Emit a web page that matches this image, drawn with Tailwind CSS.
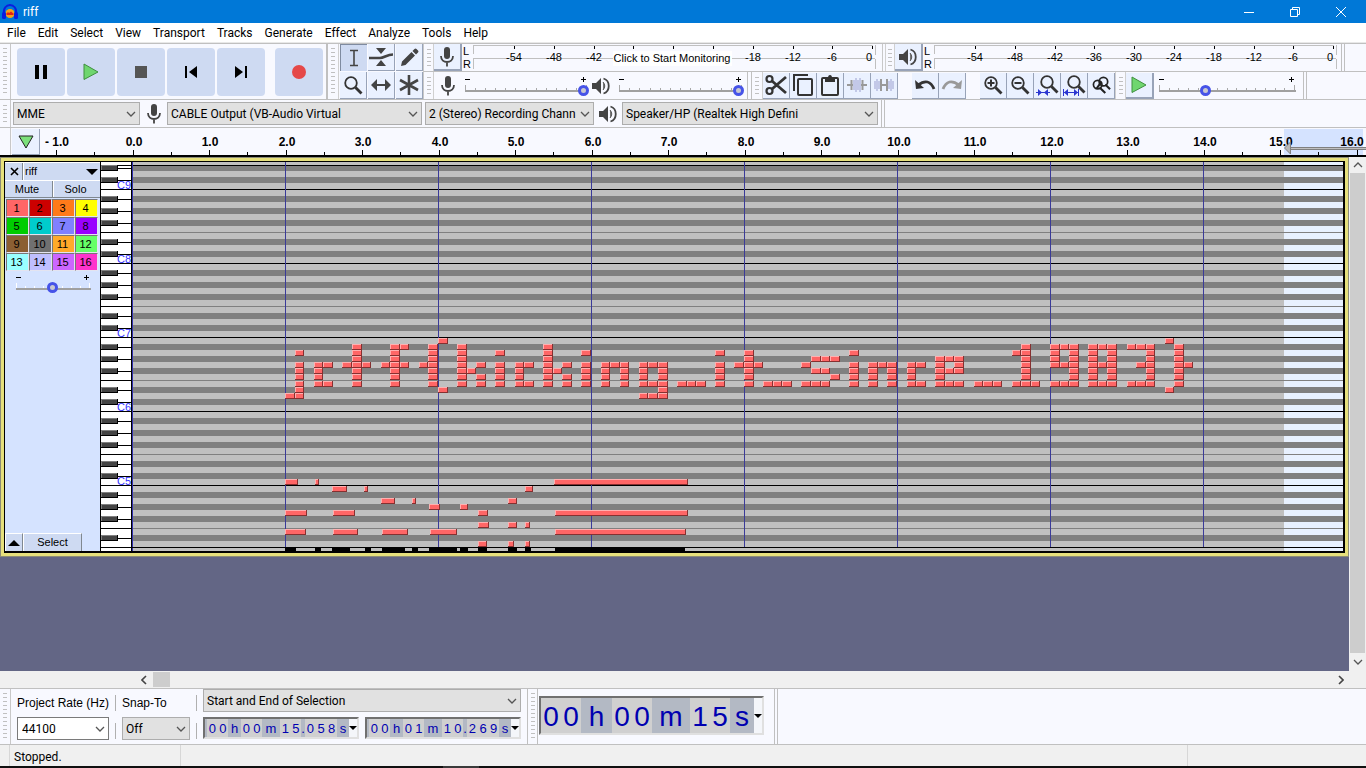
<!DOCTYPE html>
<html lang="en">
<head>
<meta charset="utf-8">
<title>riff</title>
<script src="https://cdn.jsdelivr.net/npm/@tailwindcss/browser@4"></script>
</head>
<body class="h-screen flex flex-col overflow-hidden bg-[#f8f9ff] font-['Liberation_Sans',sans-serif] text-black text-[11px] select-none">
<svg class="hidden">
  <symbol id="mic" viewBox="0 0 16 20"><rect x="5" y="0" width="6" height="12" rx="3" fill="#444"/><path d="M2 9c0 8 12 8 12 0M8 15v4.500" fill="none" stroke="#444" stroke-width="1.800"/></symbol>
  <symbol id="spk" viewBox="0 0 20 18"><path d="M1 6h4l5-5v16l-5-5H1z" fill="#444"/><path d="M12 5q3.500 4 0 8" fill="#777" stroke="#555"/><path d="M12.500 1.500c7 2 7 13 0 15" fill="none" stroke="#444" stroke-width="1.800"/></symbol>
  <symbol id="chev" viewBox="0 0 10 6"><path d="M1 1l4 4 4-4" fill="none" stroke="#555" stroke-width="1.300"/></symbol>
  <symbol id="lens" viewBox="0 0 20 20"><circle cx="8" cy="8" r="5.800" fill="none" stroke="#333" stroke-width="1.800"/><path d="M12.500 12.500l6 6" stroke="#333" stroke-width="2.800"/></symbol>
  <symbol id="grab" viewBox="0 0 4 50"><path d="M0 1.500h4M0 5.500h4M0 9.500h4M0 13.500h4M0 17.500h4M0 21.500h4M0 25.500h4M0 29.500h4M0 33.500h4M0 37.500h4M0 41.500h4M0 45.500h4" stroke="#c0c0c0"/></symbol>
  <symbol id="grabs" viewBox="0 0 4 20"><path d="M0 1.500h4M0 5.500h4M0 9.500h4M0 13.500h4M0 17.500h4" stroke="#c0c0c0"/></symbol>
  <symbol id="playg" viewBox="0 0 16 18"><path d="M1 1v15.500L15 9z" fill="#6fd66f" stroke="#3f8f3f"/></symbol>
</svg>

<header class="h-[23px] shrink-0 bg-[#0078d7] flex items-center pl-[2px] pr-[2px] text-white font-[Roboto,sans-serif] text-[12px]">
  <svg class="w-4 h-4" viewBox="0 0 16 16"><path d="M2 10C0 -2 16 -2 14 10" fill="none" stroke="#0a1ee0" stroke-width="2"/><circle cx="8" cy="9.500" r="4.500" fill="#f6a01a"/><path d="M4 10l2-2 1 1 2-1.500 3 2.500-1 1H5z" fill="#e3221a"/><rect x="0" y="8" width="4" height="7" rx="1.500" fill="#0a1ee0"/><rect x="12" y="8" width="4" height="7" rx="1.500" fill="#0a1ee0"/></svg>
  <h1 class="ml-[5px] grow">riff</h1>
  <button aria-label="Minimize" class="w-[46px] h-full grid place-items-center"><svg class="w-[10px] h-[10px]" viewBox="0 0 10 10"><path d="M0 5.500h10" stroke="#fff"/></svg></button>
  <button aria-label="Restore" class="w-[46px] h-full grid place-items-center"><svg class="w-[10px] h-[10px]" viewBox="0 0 10 10" fill="none" stroke="#fff"><path d="M.5 2.500h7v7h-7zM2.500 2.500v-2h7v7h-2"/></svg></button>
  <button aria-label="Close" class="w-[46px] h-full grid place-items-center"><svg class="w-[10px] h-[10px]" viewBox="0 0 10 10"><path d="M0 0l10 10M10 0L0 10" stroke="#fff"/></svg></button>
</header>

<nav class="h-[20px] shrink-0 bg-white border-b border-[#e8e8e8] flex items-center pl-[7px] gap-[12px] font-[Roboto,sans-serif] text-[12px]">
  <button>File</button><button>Edit</button><button>Select</button><button>View</button><button>Transport</button><button>Tracks</button><button>Generate</button><button>Effect</button><button>Analyze</button><button>Tools</button><button>Help</button>
</nav>

<section class="h-[57px] shrink-0 flex border-t border-b border-[#c0c0c0]">
  <div class="w-[11px] border-r border-[#c8c8c8] grid place-items-center"><svg class="w-1 h-[50px]"><use href="#grab"/></svg></div>
  <div class="w-[317px] flex items-center pl-[6px] gap-[2px] border-r-2 border-[#c0c0c0]">
    <button aria-label="Pause" class="w-12 h-12 rounded bg-[#cedaf2] grid place-items-center"><svg class="w-3 h-[14px]" viewBox="0 0 12 14"><path d="M0 0h4v14H0zM8 0h4v14H8z"/></svg></button>
    <button aria-label="Play" class="w-12 h-12 rounded bg-[#cedaf2] grid place-items-center"><svg class="w-4 h-[18px]"><use href="#playg"/></svg></button>
    <button aria-label="Stop" class="w-12 h-12 rounded bg-[#cedaf2] grid place-items-center"><svg class="w-3 h-3" viewBox="0 0 12 12"><path d="M0 0h12v12H0z" fill="#555"/></svg></button>
    <button aria-label="Skip to start" class="w-12 h-12 rounded bg-[#cedaf2] grid place-items-center"><svg class="w-3 h-[14px]" viewBox="0 0 12 14"><path d="M0 1h2v12H0zM12 1v12L4 7z"/></svg></button>
    <button aria-label="Skip to end" class="w-12 h-12 rounded bg-[#cedaf2] grid place-items-center"><svg class="w-3 h-[14px]" viewBox="0 0 12 14"><path d="M10 1h2v12h-2zM0 1v12l8-6z"/></svg></button>
    <button aria-label="Record" class="w-12 h-12 ml-2 rounded bg-[#cedaf2] grid place-items-center"><svg class="w-[14px] h-[14px]" viewBox="0 0 14 14"><circle cx="7" cy="7" r="7" fill="#e54848"/></svg></button>
  </div>
  <div class="w-[11px] border-r border-[#d0d0d0] grid place-items-center"><svg class="w-1 h-[50px]"><use href="#grab"/></svg></div>
  <div class="w-[85px] grid grid-cols-3 grid-rows-2 gap-px pl-px border-r border-[#c8c8c8]">
    <button aria-label="Selection tool" class="bg-[#cedaf2] border-l border-t border-[#7f8ba0] grid place-items-center"><svg class="w-5 h-5" viewBox="0 0 20 20"><path d="M6 2.500h8M6 17.500h8M10 2.500v15" stroke="#444" stroke-width="1.600"/></svg></button>
    <button aria-label="Envelope tool" class="bg-[#eaf1ff] border-r border-b border-[#98a3b8] grid place-items-center"><svg class="w-6 h-[22px]" viewBox="0 0 24 22"><path d="M7 2h10l-5 6zM7 20h10l-5-6z" fill="#444"/><path d="M0 12h11c4 0 7-3.500 13-3.500" fill="none" stroke="#444" stroke-width="2.500"/></svg></button>
    <button aria-label="Draw tool" class="bg-[#eaf1ff] border-r border-b border-[#98a3b8] grid place-items-center"><svg class="w-[19px] h-[19px]" viewBox="0 0 19 19"><path d="M1 18l1-4.500L11.500 4l3.500 3.500L5.500 17zM12.500 3l2-2q1-1 2 0l1.500 1.500q1 1 0 2l-2 2z" fill="#444"/></svg></button>
    <button aria-label="Zoom tool" class="bg-[#eaf1ff] border-r border-b border-[#98a3b8] grid place-items-center"><svg class="w-5 h-5"><use href="#lens"/></svg></button>
    <button aria-label="Time shift tool" class="bg-[#eaf1ff] border-r border-b border-[#98a3b8] grid place-items-center"><svg class="w-5 h-3" viewBox="0 0 20 12"><path d="M0 6l6-6v12zM20 6l-6-6v12z" fill="#444"/><path d="M4 6h12" stroke="#444" stroke-width="2"/></svg></button>
    <button aria-label="Multi tool" class="bg-[#eaf1ff] border-r border-b border-[#98a3b8] grid place-items-center"><svg class="w-5 h-5" viewBox="0 0 20 20"><path d="M10 0v20M1 5l18 10M19 5L1 15" stroke="#444" stroke-width="2.600"/></svg></button>
  </div>
  <div class="grow flex flex-col">
    <div class="h-[28px] flex border-b border-[#c0c0c0]">
      <div class="w-[10px] border-r border-[#d0d0d0] grid place-items-center"><svg class="w-1 h-5"><use href="#grabs"/></svg></div>
      <button aria-label="Recording meter" class="w-[28px] bg-[#eaf1ff] border-r-2 border-b-2 border-[#98a3b8] grid place-items-center"><svg class="w-4 h-5"><use href="#mic"/></svg></button>
      <svg class="meter w-[420px] h-[27px]" data-zero="410" data-note="Click to Start Monitoring"></svg>
      <div class="w-[3px] border-l border-[#c8c8c8]"></div>
      <div class="w-[10px] border-x border-[#d0d0d0] grid place-items-center"><svg class="w-1 h-5"><use href="#grabs"/></svg></div>
      <button aria-label="Playback meter" class="w-[28px] bg-[#eaf1ff] border-r-2 border-b-2 border-[#98a3b8] grid place-items-center"><svg class="w-5 h-[18px]"><use href="#spk"/></svg></button>
      <svg class="meter w-[418px] h-[27px]" data-zero="410" data-note=""></svg>
      <div class="w-[4px] border-x border-[#c0c0c0]"></div>
    </div>
    <div class="h-[27px] flex items-center">
      <div class="w-[10px] h-full border-r border-[#d0d0d0] grid place-items-center"><svg class="w-1 h-5"><use href="#grabs"/></svg></div>
      <svg class="w-4 h-5 ml-[6px] mr-[9px]"><use href="#mic"/></svg>
      <div class="slider relative w-[124px] h-[26px]" data-n="12" data-w="124"><input type="range" aria-label="Recording volume" value="100" class="absolute left-0 top-3 w-full h-[11px] appearance-none bg-transparent [&::-webkit-slider-thumb]:appearance-none [&::-webkit-slider-thumb]:w-[11px] [&::-webkit-slider-thumb]:h-[11px] [&::-webkit-slider-thumb]:rounded-full [&::-webkit-slider-thumb]:border-[3px] [&::-webkit-slider-thumb]:border-[#4653e8] [&::-webkit-slider-thumb]:bg-[#c8c8d0]"></div>
      <svg class="w-5 h-[18px] ml-[2px] mr-[8px]"><use href="#spk"/></svg>
      <div class="slider relative w-[125px] h-[26px]" data-n="12" data-w="125"><input type="range" aria-label="Playback volume" value="100" class="absolute left-0 top-3 w-full h-[11px] appearance-none bg-transparent [&::-webkit-slider-thumb]:appearance-none [&::-webkit-slider-thumb]:w-[11px] [&::-webkit-slider-thumb]:h-[11px] [&::-webkit-slider-thumb]:rounded-full [&::-webkit-slider-thumb]:border-[3px] [&::-webkit-slider-thumb]:border-[#4653e8] [&::-webkit-slider-thumb]:bg-[#c8c8d0]"></div>
      <div class="w-[5px] ml-[3px] h-full border-x border-[#c0c0c0]"></div>
      <div class="w-[11px] h-full border-r border-[#d0d0d0] grid place-items-center"><svg class="w-1 h-5"><use href="#grabs"/></svg></div>
      <button aria-label="Cut" class="w-[27px] h-[26px] bg-[#eaf1ff] border-r border-b border-[#98a3b8] grid place-items-center"><svg class="w-[22px] h-[22px]" viewBox="0 0 22 22" fill="none" stroke="#333"><circle cx="4.500" cy="5" r="3" stroke-width="2.200"/><circle cx="4.500" cy="17" r="3" stroke-width="2.200"/><path d="M7 7l14 12M7 15L21 3" stroke-width="2.800"/></svg></button>
      <button aria-label="Copy" class="w-[27px] h-[26px] bg-[#eaf1ff] border-r border-b border-[#98a3b8] grid place-items-center"><svg class="w-[22px] h-[24px]" viewBox="0 0 22 24" fill="none" stroke="#333" stroke-width="2"><path d="M2 18V2h14"/><rect x="6" y="6" width="14" height="16" rx="1"/></svg></button>
      <button aria-label="Paste" class="w-[27px] h-[26px] bg-[#eaf1ff] border-r border-b border-[#98a3b8] grid place-items-center"><svg class="w-5 h-[23px]" viewBox="0 0 20 23"><rect x="2" y="4" width="16" height="17" rx="1" fill="none" stroke="#333" stroke-width="2"/><path d="M5 4h3q0-3 2-3t2 3h3v4H5z" fill="#333"/></svg></button>
      <button aria-label="Trim" class="w-[27px] h-[26px] bg-[#eaf1ff] border-r border-b border-[#98a3b8] grid place-items-center"><svg class="w-5 h-4" viewBox="0 0 20 16"><path d="M0 8h6M14 8h6" stroke="#999" stroke-width="2"/><path d="M4.500 3v10M15.500 3v10" stroke="#999" stroke-width="2"/><path d="M7 3v10M9 1v14M11 3v10M13 1v14" stroke="#a8aed8" stroke-width="1.200"/></svg></button>
      <button aria-label="Silence" class="w-[27px] h-[26px] bg-[#eaf1ff] border-r border-b border-[#98a3b8] grid place-items-center"><svg class="w-5 h-4" viewBox="0 0 20 16"><path d="M7 2v12M13 2v12M7 8h6" stroke="#999" stroke-width="2"/><path d="M1 4v8M3 2v12M5 4v8M15 4v8M17 2v12M19 4v8" stroke="#a8aed8" stroke-width="1.200"/></svg></button>
      <button aria-label="Undo" class="w-[27px] h-[26px] ml-[14px] bg-[#eaf1ff] border-r border-b border-[#98a3b8] grid place-items-center"><svg class="w-[22px] h-[14px]" viewBox="0 0 22 14"><path d="M1 2l1 9 8-1z" fill="#333"/><path d="M4 7q11-8 16 4" fill="none" stroke="#333" stroke-width="2.800"/></svg></button>
      <button aria-label="Redo" class="w-[27px] h-[26px] bg-[#eaf1ff] border-r border-b border-[#98a3b8] grid place-items-center"><svg class="w-[22px] h-[14px]" viewBox="0 0 22 14"><path d="M21 2l-1 9-8-1z" fill="#999"/><path d="M18 7Q7-1 2 11" fill="none" stroke="#999" stroke-width="2.800"/></svg></button>
      <button aria-label="Zoom in" class="w-[27px] h-[26px] ml-[14px] bg-[#eaf1ff] border-r border-b border-[#98a3b8] grid place-items-center"><svg class="w-5 h-5" viewBox="0 0 20 20"><use href="#lens"/><path d="M4.500 8h7M8 4.500v7" stroke="#333" stroke-width="2"/></svg></button>
      <button aria-label="Zoom out" class="w-[27px] h-[26px] bg-[#eaf1ff] border-r border-b border-[#98a3b8] grid place-items-center"><svg class="w-5 h-5" viewBox="0 0 20 20"><use href="#lens"/><path d="M4.500 8h7" stroke="#333" stroke-width="2"/></svg></button>
      <button aria-label="Fit selection" class="w-[27px] h-[26px] bg-[#eaf1ff] border-r border-b border-[#98a3b8] grid place-items-center"><svg class="w-[23px] h-[22px]" viewBox="0 0 23 22"><svg x="3" width="20" height="20" viewBox="0 0 20 20"><use href="#lens"/></svg><path d="M0 18.500h14" stroke="#2b36d0"/><path d="M2 15l4 3.500L2 22zM12 15l-4 3.500 4 3.500z" fill="#2b36d0"/></svg></button>
      <button aria-label="Fit project" class="w-[27px] h-[26px] bg-[#eaf1ff] border-r border-b border-[#98a3b8] grid place-items-center"><svg class="w-[23px] h-[22px]" viewBox="0 0 23 22"><svg x="3" width="20" height="20" viewBox="0 0 20 20"><use href="#lens"/></svg><path d="M.5 15v7M15.500 15v7M1 18.500h14" stroke="#2b36d0"/><path d="M1 18.500l4-3.500v7zM15 18.500l-4-3.500v7z" fill="#2b36d0"/></svg></button>
      <button aria-label="Zoom toggle" class="w-[27px] h-[26px] bg-[#eaf1ff] border-r border-b border-[#98a3b8] grid place-items-center"><svg class="w-[19px] h-[19px]" viewBox="0 0 20 20" fill="none" stroke="#222"><circle cx="6" cy="9" r="4.500" stroke-width="1.800"/><circle cx="12" cy="6" r="4.500" stroke-width="1.800"/><path d="M8 12l6 6M14 9l5 5M5 13l5-7" stroke-width="2.200"/></svg></button>
      <div class="w-[11px] h-full border-x border-[#d0d0d0] grid place-items-center"><svg class="w-1 h-5"><use href="#grabs"/></svg></div>
      <button aria-label="Play at speed" class="w-[28px] h-[26px] bg-[#eaf1ff] border-r-2 border-b-2 border-[#98a3b8] grid place-items-center"><svg class="w-4 h-[18px]"><use href="#playg"/></svg></button>
      <div class="slider relative w-[138px] h-[26px] ml-[5px]" data-n="14" data-w="138"><input type="range" aria-label="Playback speed" value="32" class="absolute left-0 top-3 w-full h-[11px] appearance-none bg-transparent [&::-webkit-slider-thumb]:appearance-none [&::-webkit-slider-thumb]:w-[11px] [&::-webkit-slider-thumb]:h-[11px] [&::-webkit-slider-thumb]:rounded-full [&::-webkit-slider-thumb]:border-[3px] [&::-webkit-slider-thumb]:border-[#4653e8] [&::-webkit-slider-thumb]:bg-[#c8c8d0]"></div>
      <div class="w-[4px] ml-[6px] h-full border-x border-[#c0c0c0]"></div>
    </div>
  </div>
</section>

<section class="h-[28px] shrink-0 flex items-center border-b border-[#c0c0c0] font-[Roboto,sans-serif] text-[12px]">
  <div class="w-[11px] h-full border-r border-[#c8c8c8] grid place-items-center mr-[2px]"><svg class="w-1 h-5"><use href="#grabs"/></svg></div>
  <div class="relative w-[127px] h-[23px]"><select aria-label="Audio host" class="appearance-none w-full h-full bg-[#e1e1e1] border border-[#adadad] pl-[3px]"><option>MME</option></select><svg class="absolute right-[4px] top-[9px] w-[10px] h-[6px] pointer-events-none"><use href="#chev"/></svg></div>
  <svg class="w-4 h-5 ml-[6px] mr-[5px]"><use href="#mic"/></svg>
  <div class="relative w-[255px] h-[23px]"><select aria-label="Recording device" class="appearance-none w-full h-full bg-[#e1e1e1] border border-[#adadad] pl-[3px]"><option>CABLE Output (VB-Audio Virtual</option></select><svg class="absolute right-[4px] top-[9px] w-[10px] h-[6px] pointer-events-none"><use href="#chev"/></svg></div>
  <div class="relative w-[169px] h-[23px] ml-[3px]"><select aria-label="Recording channels" class="appearance-none w-full h-full bg-[#e1e1e1] border border-[#adadad] pl-[3px]"><option>2 (Stereo) Recording Chann</option></select><svg class="absolute right-[4px] top-[9px] w-[10px] h-[6px] pointer-events-none"><use href="#chev"/></svg></div>
  <svg class="w-5 h-[18px] mx-1"><use href="#spk"/></svg>
  <div class="relative w-[256px] h-[23px]"><select aria-label="Playback device" class="appearance-none w-full h-full bg-[#e1e1e1] border border-[#adadad] pl-[3px]"><option>Speaker/HP (Realtek High Defini</option></select><svg class="absolute right-[4px] top-[9px] w-[10px] h-[6px] pointer-events-none"><use href="#chev"/></svg></div>
  <div class="w-[4px] ml-[3px] h-full border-x border-[#c0c0c0]"></div>
</section>

<section class="h-[29px] shrink-0 flex border-b-2 border-black">
  <div class="w-[11px] border-r border-[#c8c8c8]"></div>
  <button aria-label="Pinned play head" class="w-[28px] ml-px mt-px bg-[#eaf1ff] border-r border-b border-[#98a3b8] grid place-items-center"><svg class="w-4 h-[14px]" viewBox="0 0 16 14"><path d="M1 1h14L8 13z" fill="#7be07b" stroke="#222"/></svg></button>
  <svg id="ruler" class="grow h-[27px]"></svg>
</section>

<main class="grow min-h-0 flex bg-[#636685]">
  <div class="grow min-w-0">
    <section class="m-px mb-0 border-[3px] border-[#e6e07c] outline outline-[#8c8c78]">
      <div class="h-[392px] flex border border-r-2 border-b-2 border-black">
        <div class="w-[95px] shrink-0 bg-[#d5e3ff] flex flex-col">
          <div class="h-[18px] flex bg-[#cedaf2] border-t border-white">
            <button aria-label="Close track" class="w-[18px] pl-[2px] border-r border-[#808890] grid place-items-center"><svg class="w-[9px] h-[9px]" viewBox="0 0 9 9"><path d="M1 1l7 7M8 1L1 8" stroke="#000" stroke-width="1.600"/></svg></button>
            <button class="grow flex items-center justify-between pl-px pr-[2px] border-l border-white">riff<svg class="w-[12px] h-[6px]" viewBox="0 0 12 6"><path d="M0 0h12L6 6z"/></svg></button>
          </div>
          <div class="h-[18px] flex bg-[#cedaf2] border-t border-white border-b border-b-[#808890]">
            <button class="w-[48px] pr-[3px] border-r border-[#808890]">Mute</button><button class="grow pr-[3px] border-l border-white">Solo</button>
          </div>
          <div id="channels" class="grid grid-cols-4 ml-px w-[92px] mt-px"></div>
          <div class="slider relative w-[76px] h-[26px] ml-[11px]" data-n="8" data-w="76"><input type="range" aria-label="Velocity" value="48" class="absolute left-0 top-[11px] w-full h-[11px] appearance-none bg-transparent [&::-webkit-slider-thumb]:appearance-none [&::-webkit-slider-thumb]:w-[11px] [&::-webkit-slider-thumb]:h-[11px] [&::-webkit-slider-thumb]:rounded-full [&::-webkit-slider-thumb]:border-[3px] [&::-webkit-slider-thumb]:border-[#4653e8] [&::-webkit-slider-thumb]:bg-[#c8c8d0]"></div>
          <div class="mt-auto h-[18px] flex">
            <button aria-label="Collapse" class="w-[18px] bg-[#cedaf2] border-t border-l border-white border-r border-r-[#808890] grid place-items-center"><svg class="w-[12px] h-[6px]" viewBox="0 0 12 6"><path d="M0 6h12L6 0z"/></svg></button>
            <button class="w-[59px] bg-[#cedaf2] border-t border-l border-white border-r border-r-[#808890]">Select</button>
          </div>
        </div>
        <svg id="keys" class="w-[32px] h-full shrink-0 bg-white"></svg>
        <svg id="roll" class="grow min-w-0 h-full bg-[#e8f1ff]"></svg>
      </div>
    </section>
  </div>
  <div class="w-[17px] shrink-0 bg-[#f0f0f0] flex flex-col items-center">
    <button aria-label="Scroll up" class="h-4 w-full grid place-items-center"><svg class="w-[10px] h-[6px] rotate-180"><use href="#chev"/></svg></button>
    <div class="grow w-[15px] bg-[#cdcdcd]"></div>
    <button aria-label="Scroll down" class="h-[18px] w-full grid place-items-center"><svg class="w-[10px] h-[6px]"><use href="#chev"/></svg></button>
  </div>
</main>

<div class="h-[17px] shrink-0 bg-[#f0f0f0] flex items-center pl-[135px] pr-[17px]">
  <button aria-label="Scroll left" class="w-[18px] grid place-items-center"><svg class="w-[6px] h-[10px]" viewBox="0 0 6 10"><path d="M5 1L1 5l4 4" fill="none" stroke="#444" stroke-width="1.600"/></svg></button>
  <div class="w-[17px] h-[15px] bg-[#cdcdcd]"></div>
  <button aria-label="Scroll right" class="w-[17px] ml-auto grid place-items-center"><svg class="w-[6px] h-[10px]" viewBox="0 0 6 10"><path d="M1 1l4 4-4 4" fill="none" stroke="#444" stroke-width="1.600"/></svg></button>
</div>

<section class="h-[57px] shrink-0 flex border-t border-b border-[#c0c0c0]">
  <div class="w-[11px] border-r border-[#c8c8c8] grid place-items-center"><svg class="w-1 h-[50px]"><use href="#grab"/></svg></div>
  <div class="flex flex-col w-[92px] ml-[6px] pt-[6px] gap-[6px]">
    <label for="rate" class="h-4 text-[12px] leading-4 whitespace-nowrap">Project Rate (Hz)</label>
    <div class="relative h-[23px] font-[Roboto,sans-serif] text-[12px]"><input id="rate" value="44100" class="w-full h-full bg-white border border-[#7a7a7a] pl-1"><svg class="absolute right-[4px] top-[9px] w-[10px] h-[6px] pointer-events-none"><use href="#chev"/></svg></div>
  </div>
  <div class="w-px ml-[6px] flex flex-col gap-3 pt-[6px]"><i class="h-4 bg-[#b0b0b0]"></i><i class="h-4 bg-[#b0b0b0]"></i></div>
  <div class="flex flex-col w-[68px] ml-[6px] pt-[6px] gap-[6px]">
    <label for="snap" class="h-4 text-[12px] leading-4">Snap-To</label>
    <div class="relative h-[23px] font-[Roboto,sans-serif] text-[12px]"><select id="snap" class="appearance-none w-full h-full bg-[#e1e1e1] border border-[#adadad] pl-[3px]"><option>Off</option></select><svg class="absolute right-[4px] top-[9px] w-[10px] h-[6px] pointer-events-none"><use href="#chev"/></svg></div>
  </div>
  <div class="w-px ml-[6px] flex flex-col gap-3 pt-[6px]"><i class="h-4 bg-[#b0b0b0]"></i><i class="h-4 bg-[#b0b0b0]"></i></div>
  <div class="w-[318px] ml-[6px] flex flex-col gap-[5px]">
    <div class="relative h-[23px] font-[Roboto,sans-serif] text-[12px]"><select aria-label="Selection mode" class="appearance-none w-full h-full bg-[#e1e1e1] border border-[#adadad] pl-[3px]"><option>Start and End of Selection</option></select><svg class="absolute right-[4px] top-[9px] w-[10px] h-[6px] pointer-events-none"><use href="#chev"/></svg></div>
    <div class="flex gap-[6px] text-[13px] leading-[20px] text-[#0000b0]">
      <div class="time w-[156px] h-[22px] border-2 border-t-[#707070] border-l-[#707070] border-[#e0e0e0] bg-[#b3b9c4] flex pl-[2px]" data-t="00|h|00|m|15|.|058|s" data-w="21|13|21|18|21|4|32|12"></div>
      <div class="time w-[156px] h-[22px] border-2 border-t-[#707070] border-l-[#707070] border-[#e0e0e0] bg-[#b3b9c4] flex pl-[2px]" data-t="00|h|01|m|10|.|269|s" data-w="21|13|21|18|21|4|32|12"></div>
    </div>
  </div>
  <div class="w-[17px] ml-[6px] grid grid-cols-[10px] border-l border-[#c0c0c0]"><div class="border-r border-[#c0c0c0] grid place-items-center"><svg class="w-1 h-[50px]"><use href="#grab"/></svg></div></div>
  <div class="-ml-[5px] mt-[7px] text-[28px] leading-[37px] text-[#0000b0]">
    <div class="time w-[225px] h-[39px] border-2 border-t-[#707070] border-l-[#707070] border-[#e0e0e0] bg-[#b3b9c4] flex" data-t="00|h|00|m|15|s" data-w="40|31|40|38|40|24"></div>
  </div>
  <div class="w-[4px] ml-[10px] border-x border-[#c0c0c0]"></div>
</section>

<footer class="h-[21px] shrink-0 bg-[#f0f0f0] flex items-center font-[Roboto,sans-serif] text-[12px]">
  <div class="w-[181px] h-full flex items-center border-r border-[#d7d7d7]"><div class="w-[10px] h-full border-r border-[#d7d7d7]"></div><span class="pl-1 pt-[3px]">Stopped.</span></div>
  <div class="grow h-full border-r border-[#d7d7d7]"></div>
  <div class="w-[178px]"></div>
</footer>
<div class="h-[2px] shrink-0 bg-[#101010] pl-[443px]"><div class="w-9 h-full bg-[#3a3a3a]"></div></div>

<script>
const R = (x, y, w, h, c) => `<rect x="${x}" y="${y}" width="${w}" height="${h}" fill="${c}"/>`;

/* level meters: the prompt takes the place of the middle labels */
document.querySelectorAll('.meter').forEach(m => {
  const z = +m.dataset.zero, note = m.dataset.note;
  let s = `<text x="1" y="11">L</text><text x="1" y="24">R</text>`;
  s += R(11, 1, z - 10, 1, '#c0c0c0') + R(11, 14, z - 8, 1, '#c0c0c0');
  s += R(11, 1, 1, 9, '#c0c0c0') + R(11, 15, 1, 10, '#c0c0c0') + R(z + 3, 1, 1, 10, '#c0c0c0') + R(z + 3, 15, 1, 10, '#c0c0c0');
  for (let i = 0; i < 10; i++) {
    const db = -54 + i * 6, x = Math.round(z - 358 + i * 39.800);
    s += R(x, 2, 1, 3, '#000');
    if (!(note && db >= -36 && db <= -24)) s += `<text x="${db ? x : x - 3}" y="17" text-anchor="middle">${db}</text>`;
  }
  if (note) s += R(151, 7, 119, 15, '#fff') + `<text x="210" y="18" text-anchor="middle">${note}</text>`;
  m.innerHTML = s;
});

/* slider scales */
document.querySelectorAll('.slider').forEach(d => {
  const w = +d.dataset.w, n = +d.dataset.n;
  let s = R(0, 17, w - 1, 2, '#a0a0a0') + R(0, 6, 5, 1, '#000') + R(w - 8, 6, 5, 1, '#000') + R(w - 6, 4, 1, 5, '#000');
  const tick = w < 100 ? '#fff' : '#a8a8a8';
  for (let i = 0; i <= n; i++) {
    const e = i % n === 0;
    s += R(Math.round(i * (w - 3) / n), e ? 12 : 15, 1, e ? 5 : 2, tick);
  }
  d.insertAdjacentHTML('afterbegin', `<svg class="absolute left-0 top-0 w-full h-full">${s}</svg>`);
});

/* time ruler */
{
  const o = 40, px = t => 133 - o + t * 76.500;
  let s = R(1284 - o, 1, 79, 26, '#d5e3ff');
  for (let t = -1; t <= 16; t += .5) {
    const M = Number.isInteger(t), x = Math.floor(px(t));
    s += R(x, M ? 22 : 24, 1, M ? 5 : 3, '#000');
    if (M) s += `<text x="${t === 16 ? x - 5 : x + 1}" y="18" text-anchor="middle" font-size="12" font-weight="700">${t < 0 ? '- 1.0' : t.toFixed(1)}</text>`;
  }
  s += R(1290 - o, 19, 80, 3, '#808080') + R(1290 - o, 20, 80, 1, '#c0c0c0') + `<path d="M${1284.500 - o} 20l6-6v12z" fill="#b8b8b8" stroke="#808080"/>`;
  document.getElementById('ruler').innerHTML = s;
}

/* MIDI channel buttons */
document.getElementById('channels').innerHTML =
  '#ff6666 #cc0000 #ff7a1a #ffff00 #00cc00 #00cccc #8080ff #9900ff #8b5f33 #707070 #ffaa2a #66ff66 #99ffff #bfbfff #cc66ff #ff33cc'
  .split(' ').map((c, i) => `<button class="h-[18px] pr-[2px] border-t border-l border-t-[#777] border-l-[#777] border-r border-b border-r-[#e4e4f0] border-b-[#e4e4f0]" style="background:${c}">${i + 1}</button>`).join('');

/* keyboard and piano roll share the vertical scale of the window */
{
  const Cs = [189, 263, 337, 411, 485];
  let k = '', r = R(132, 162, 1152, 389, '#c0c0c0');
  const W = 4000;
  const bk = y => R(118, y + 3, 13, 1, '#000') + R(101, y, 17, 6, '#000') + R(101, y, 16, 5, '#808080') + R(102, y + 1, 15, 4, '#444');
  r += R(132, 165, W, 1, '#000') + R(132, 166, W, 5, '#808080') + R(132, 177, W, 6, '#808080');
  k += R(101, 165, 30, 1, '#000') + bk(165) + bk(177);
  Cs.forEach((c, i) => {
    r += R(132, c, W, 1, '#000');
    [7, 19, 31, 50, 62].forEach(d => { if (c + d < 545) { r += R(132, c + d, W, 6, '#808080'); k += bk(c + d); } });
    r += R(132, c + 43, W, 1, '#808080');
    k += R(101, c, 30, 1, '#000') + R(101, c + 43, 30, 1, '#000');
    k += `<text x="117" y="${c}" fill="#3333ff">C${9 - i}</text>`;
  });
  k += R(101, 547, 30, 1, '#000') + R(100, 162, 1, 389, '#000') + R(131, 162, 1, 389, '#000');
  r += R(132, 162, 1, 389, '#3030b0');
  for (let x = 285; x < 1210; x += 153) r += R(x, 162, 1, 385, '#3a3a98');

  const note = (x, y, w) => R(x, y, w, 6, '#863030') + R(x, y, w - 1, 5, '#ffb0b0') + R(x + 1, y + 1, w - 2, 4, '#ff6666');
  const rows = [338, 344, 350, 356, 362, 368, 374, 381, 387, 393];
  /* grid column: row numbers */
  const cols = {0:'9',1:'2456789',3:'4567',4:'47',6:'4',7:'1234567',8:'4',10:'4',11:'1234567',12:'14',14:'4',15:'1234567',16:'08',
    18:'1234567',19:'5',20:'467',22:'24567',24:'4567',25:'47',27:'1234567',28:'5',29:'467',31:'24567',33:'4567',34:'4',35:'4567',
    37:'4567',38:'479',39:'456789',41:'7',42:'7',43:'7',45:'24567',47:'4',48:'234567',49:'4',50:'7',51:'7',52:'7',
    54:'47',55:'357',56:'357',57:'36',59:'24567',61:'4567',62:'4',63:'4567',65:'4567',66:'47',68:'34567',69:'357',70:'3457',
    72:'7',73:'7',74:'7',76:'27',77:'1234567',78:'7',80:'12347',81:'147',82:'1234567',84:'1234567',85:'147',86:'1234567',
    88:'17',89:'147',90:'1234567',92:'08',93:'1234567',94:'4'};
  cols[37] += '9';
  const cx = i => Math.round(285 + i * 9.5625);
  for (const c in cols) for (const y of cols[c]) r += note(cx(+c), rows[y], cx(+c + 1) - cx(+c));
  const riff = {479:[285,298,315,319,554,688],486:[332,347,364,368,525,533],498:[381,395,412,416,508,517],504:[429,440,460,468],
    510:[285,307,333,355,478,488,555,688],522:[478,489,508,517,525,530],529:[285,306,333,358,382,408,430,457,555,686],541:[478,487,508,514,525,530]};
  for (const y in riff) for (let i = 0; i < riff[y].length; i += 2) r += note(riff[y][i], +y, riff[y][i + 1] - riff[y][i]);
  r += R(132, 547, W, 1, '#000');
  const low = [285,296,315,321,332,350,365,371,382,405,412,418,429,457,460,468,478,487,508,517,525,531,555,685];
  for (let i = 0; i < low.length; i += 2) r += R(low[i], 547, low[i + 1] - low[i], 4, '#000');
  document.getElementById('keys').innerHTML = `<g transform="translate(-100 -162)">${k}</g>`;
  document.getElementById('roll').innerHTML = `<g transform="translate(-132 -162)">${r}</g>`;
}

/* time counters */
document.querySelectorAll('.time').forEach(d => {
  const w = d.dataset.w.split('|');
  d.innerHTML = d.dataset.t.split('|').map((t, i) =>
    `<span class="flex h-full shrink-0" style="width:${w[i]}px;${/\d/.test(t) ? 'background:#d0d0d0' : ''}">${[...t].map(c => `<b class="font-normal grow basis-0 flex justify-center">${c}</b>`).join('')}</span>`).join('')
    + `<button aria-label="Format" class="grow bg-[#f4f6fa] flex items-center justify-center"><svg class="w-[8px] h-[4px] shrink-0" viewBox="0 0 8 4"><path d="M0 0h8L4 4z"/></svg></button>`;
});
</script>
</body>
</html>
